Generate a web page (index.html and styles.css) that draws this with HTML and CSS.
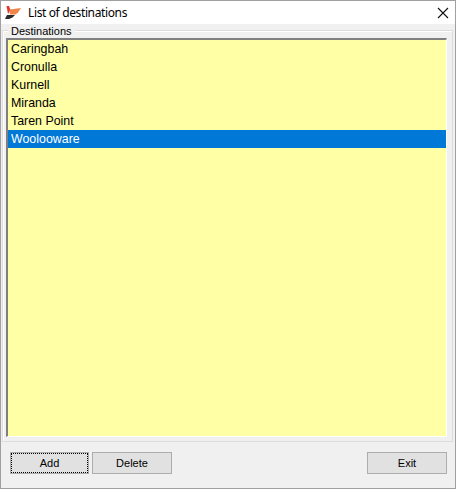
FILE: index.html
```html
<!DOCTYPE html>
<html lang="en">
<head>
    <meta charset="UTF-8">
    <title>List of destinations</title>
    <link rel="stylesheet" href="styles.css">
</head>
<body>
    <div class="window">
        <div class="titlebar">
            <svg class="app-icon" width="16" height="16" viewBox="0 0 16 16">
                <path d="M1.500 1h2.500l1.500 4L3 9z" fill="#e0392b"/>
                <path d="M4.500 4.500L16 3l-3 4.500-2.500 2H5z" fill="#f0854a"/>
                <path d="M0 14l2-4h8l-2.500 2.500L4 14z" fill="#2b2b2b"/>
            </svg>
            <span class="title">List of destinations</span>
            <svg class="close" width="12" height="12" viewBox="0 0 12 12">
                <path d="M1 1l10 10M11 1L1 11" stroke="#111" stroke-width="1.1" fill="none"/>
            </svg>
        </div>
        <div class="content">
            <div class="group">
                <span class="legend">Destinations</span>
                <ul class="list">
                    <li>Caringbah</li>
                    <li>Cronulla</li>
                    <li>Kurnell</li>
                    <li>Miranda</li>
                    <li>Taren Point</li>
                    <li class="selected">Woolooware</li>
                </ul>
            </div>
            <div class="buttons">
                <button class="btn focused">Add</button>
                <button class="btn">Delete</button>
                <button class="btn exit">Exit</button>
            </div>
        </div>
    </div>
</body>
</html>
```

FILE: styles.css
```css
html, body {
    margin: 0;
    height: 100%;
    overflow: hidden;
}
body {
    font-family: "Liberation Sans", Arial, sans-serif;
    font-size: 12px;
    color: #000;
}
.window {
    box-sizing: border-box;
    width: 456px;
    height: 489px;
    display: flex;
    flex-direction: column;
    border: 1px solid #a0a0a0;
    background-color: #f0f0f0;
}
.titlebar {
    height: 23px;
    display: flex;
    align-items: center;
    background-color: #fff;
    flex-shrink: 0;
}
.app-icon {
    margin-left: 4px;
}
.title {
    margin-left: 7px;
    font-family: "Noto Sans", sans-serif;
    font-size: 12px;
    letter-spacing: -0.37px;
    flex: 1;
}
.close {
    margin-right: 6px;
}
.content {
    flex: 1;
    display: flex;
    flex-direction: column;
    padding: 6px 2px 0 1px;
}
.group {
    position: relative;
    box-sizing: border-box;
    height: 412px;
    border: 1px solid #dcdcdc;
    box-shadow: inset 1px 1px 0 #fff;
    padding: 7px 4px 4px 3px;
}
.legend {
    position: absolute;
    top: -6px;
    left: 5px;
    padding: 0 3px;
    background-color: #f0f0f0;
    line-height: 13px;
    font-size: 11px;
}
.list {
    box-sizing: border-box;
    height: 399px;
    margin: 0 1px 0 0;
    padding: 0;
    list-style: none;
    background-color: #ffffa6;
    border-style: solid;
    border-width: 2px 1px 1px 2px;
    border-color: #7f7f7f #fff #fff #7f7f7f;
}
.list li {
    height: 18px;
    line-height: 18px;
    padding-left: 3px;
    font-size: 12.4px;
}
.list .selected {
    background-color: #0078d7;
    color: #fff;
}
.buttons {
    display: flex;
    gap: 3px;
    padding: 10px 6px 0 8px;
}
.btn {
    box-sizing: border-box;
    width: 79px;
    height: 22px;
    padding: 0;
    border: 1px solid #adadad;
    background-color: #e1e1e1;
    font-family: "Liberation Sans", Arial, sans-serif;
    font-size: 11px;
    color: #000;
}
.btn + .btn {
    width: 80px;
}
.focused {
    outline: 1px dotted #000;
    outline-offset: -2px;
}
.exit {
    margin-left: auto;
}
```
